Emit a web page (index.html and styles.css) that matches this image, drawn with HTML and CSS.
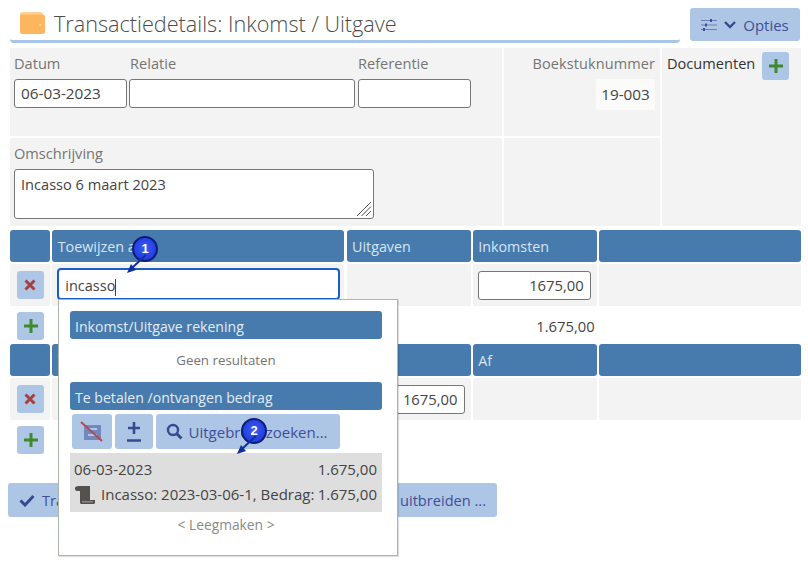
FILE: index.html
```html
<!DOCTYPE html>
<html lang="nl">
<head>
<meta charset="utf-8">
<title>Transactiedetails</title>
<link rel="stylesheet" href="styles.css">
</head>
<body>
<div class="page">
  <header class="top">
    <div class="title">
      <svg class="wallet" width="26" height="22" viewBox="0 0 26 22"><rect x="1" y="0" width="23" height="10" rx="3" fill="#fed08f"/><rect x="1" y="2.500" width="25" height="19.500" rx="2.500" fill="#fdb65f"/><rect x="20.500" y="12" width="2" height="2" fill="#fdd9a8"/></svg>
      <h1>Transactiedetails: Inkomst / Uitgave</h1>
    </div>
    <button class="btn opties">
      <svg width="16" height="14" viewBox="0 0 16 14"><path d="M0 2.500h16M0 7h16M0 11.500h16" stroke="#6f7fb4" stroke-width="1"/><path d="M10 1v3M5 5.500v3M3 10v3" stroke="#3d4f95" stroke-width="2"/></svg>
      <svg width="14" height="10" viewBox="0 0 14 10"><path d="M2 2l5 5 5-5" fill="none" stroke="#39498f" stroke-width="2.400"/></svg>
      <span>Opties</span>
    </button>
  </header>

  <section class="form">
    <div class="cell fields">
      <div class="field f-date"><label>Datum</label><div class="input digits">06-03-2023</div></div>
      <div class="field f-rel"><label class="nudge">Relatie</label><div class="input"></div></div>
      <div class="field f-ref"><label>Referentie</label><div class="input"></div></div>
    </div>
    <div class="cell boek"><label>Boekstuknummer</label><div class="boeknr">19-003</div></div>
    <div class="cell docs"><span>Documenten</span><button class="btn square"><svg width="14" height="14" viewBox="0 0 14 14"><path d="M7 0v14M0 7h14" stroke="#3f8a2c" stroke-width="3"/></svg></button></div>
    <div class="cell oms"><label>Omschrijving</label>
      <div class="input area">Incasso 6 maart 2023
        <svg class="grip" width="16" height="16" viewBox="0 0 16 16"><path d="M1 15L15 1M5.500 15L15 5.500M10 15l5-5" stroke="#555" stroke-width="1"/></svg>
      </div>
    </div>
    <div class="cell empty"></div>
  </section>

  <section class="grid first">
    <div class="th"></div><div class="th">Toewijzen aan</div><div class="th">Uitgaven</div><div class="th">Inkomsten</div><div class="th"></div>
    <div class="td center"><button class="btn square"><svg width="12" height="12" viewBox="0 0 12 12"><path d="M1.500 1.500l9 9M10.500 1.500l-9 9" stroke="#a8403f" stroke-width="3"/></svg></button></div>
    <div class="td pad"><div class="input focus">incasso<span class="caret"></span></div></div>
    <div class="td"></div>
    <div class="td pad"><div class="input num">1675,00</div></div>
    <div class="td"></div>
    <div class="add"><button class="btn square"><svg width="14" height="14" viewBox="0 0 14 14"><path d="M7 0v14M0 7h14" stroke="#3f8a2c" stroke-width="3"/></svg></button></div>
    <div class="total">1.675,00</div>
  </section>

  <section class="grid second">
    <div class="th"></div><div class="th">Tegenrekening</div><div class="th">Bij</div><div class="th">Af</div><div class="th"></div>
    <div class="td center"><button class="btn square"><svg width="12" height="12" viewBox="0 0 12 12"><path d="M1.500 1.500l9 9M10.500 1.500l-9 9" stroke="#a8403f" stroke-width="3"/></svg></button></div>
    <div class="td"></div>
    <div class="td pad-r"><div class="input num">1675,00</div></div>
    <div class="td"></div>
    <div class="td"></div>
    <div class="add"><button class="btn square"><svg width="14" height="14" viewBox="0 0 14 14"><path d="M7 0v14M0 7h14" stroke="#3f8a2c" stroke-width="3"/></svg></button></div>
  </section>

  <footer class="actions">
    <button class="btn act act-1">
      <svg width="16" height="13" viewBox="0 0 16 13"><path d="M1.500 6.500l4.500 4.500 8.500-9" fill="none" stroke="#39498f" stroke-width="3"/></svg>
      <span>Transactie opslaan</span>
    </button>
    <button class="btn act act-2"><span>Transactie uitbreiden ...</span></button>
  </footer>
</div>

<div class="popup">
  <div class="pop-head">Inkomst/Uitgave rekening</div>
  <div class="none">Geen resultaten</div>
  <div class="pop-head">Te betalen /ontvangen bedrag</div>
  <div class="tools">
    <button class="btn tool t1">
      <svg width="24" height="22" viewBox="0 0 24 22"><rect x="4" y="4" width="17" height="15" fill="#7488bb"/><path d="M8 8h9M8 14h9" stroke="#b0c7e6" stroke-width="2"/><path d="M1 1l21 19" stroke="#b24a55" stroke-width="2"/></svg>
    </button>
    <button class="btn tool t2">
      <svg width="16" height="22" viewBox="0 0 16 22"><path d="M8 1v12M2 7h12M1 19.500h14" stroke="#39498f" stroke-width="2.600"/></svg>
    </button>
    <button class="btn tool t3">
      <svg width="17" height="17" viewBox="0 0 17 17"><circle cx="7" cy="7" r="5" fill="none" stroke="#39498f" stroke-width="2.400"/><path d="M10.500 10.500l5 5" stroke="#39498f" stroke-width="3"/></svg>
      <span>Uitgebreid zoeken...</span>
    </button>
  </div>
  <div class="result">
    <div class="res-row"><span>06-03-2023</span><span>1.675,00</span></div>
    <div class="res-row">
      <span class="res-left">
        <svg width="22" height="20" viewBox="0 0 22 20"><path d="M1 2.500C2 1 4 1 5 1h11v14h5v2.500c0 1-1 1.500-2 1.500H8c-1 0-2-.5-2-1.500V6H3C1.500 6 .5 4 1 2.500z" fill="#55514e"/><path d="M8 16h11v1.500H8z" fill="#8b8885"/></svg>
        <span>Incasso: 2023-03-06-1, Bedrag:</span>
      </span>
      <span>1.675,00</span>
    </div>
  </div>
  <div class="clear">&lt; Leegmaken &gt;</div>
</div>

<div class="note n1">1</div>
<svg class="arrow a1" width="24" height="20" viewBox="0 0 24 20"><path d="M20 1L7 13" stroke="#0f2f9c" stroke-width="2"/><path d="M1 19l9-3-5-6z" fill="#0f2f9c"/></svg>
<div class="note n2">2</div>
<svg class="arrow a2" width="24" height="20" viewBox="0 0 24 20"><path d="M20 1L7 13" stroke="#0f2f9c" stroke-width="2"/><path d="M1 19l9-3-5-6z" fill="#0f2f9c"/></svg>
</body>
</html>
```
FILE: styles.css
```css
* { box-sizing: border-box; }
html, body { margin: 0; padding: 0; }
body {
  width: 808px;
  height: 563px;
  overflow: hidden;
  position: relative;
  background: #fff;
  font-family: "Open Sans", "Noto Sans", sans-serif;
  font-size: 14.600px;
  color: #444;
}
.page { padding: 8px 8px 0 8px; display: flex; flex-direction: column; }

.btn {
  border: 0;
  padding: 0;
  margin: 0;
  background: #aec6e6;
  color: #414f97;
  border-radius: 3px;
  font: inherit;
  display: inline-flex;
  align-items: center;
  justify-content: center;
}

.top { display: flex; justify-content: space-between; align-items: flex-start; height: 35px; margin-bottom: 5px; }
.title {
  width: 670px;
  height: 35px;
  margin-left: 2px;
  padding-left: 10px;
  display: flex;
  align-items: center;
  gap: 9px;
  border-bottom: 3px solid #a9c5e8;
  border-radius: 0 0 4px 4px;
}
h1 { margin: -1px 0 0; font-weight: 300; font-size: 21.650px; line-height: 30px; color: #4d4d4d; white-space: nowrap; }
.wallet { flex: none; margin-top: -3px; margin-left: -1px; }
.opties { width: 110px; height: 33px; gap: 6px; font-size: 15px; }

.form {
  margin-left: 2px;
  display: grid;
  grid-template-columns: 492px 156px 139px;
  grid-template-rows: 88px 88px;
  gap: 2px 2px;
  width: 791px;
}
.cell { background: #f3f3f3; }
label { display: block; color: #757575; font-size: 14.600px; line-height: 19px; }
.nudge { padding-left: 1px; }
.input {
  background: #fff;
  border: 1px solid #777;
  border-radius: 3px;
  height: 29px;
  padding: 0 6px;
  line-height: 27px;
  color: #444;
  font-size: 14.600px;
}
.digits { font-size: 15.300px; }
.fields { display: flex; padding: 6px 0 0 4px; gap: 2px; }
.field label { margin-bottom: 6px; }
.f-date { width: 113px; }
.f-rel { width: 226px; }
.f-ref { width: 113px; margin-left: 1px; }
.boek { padding: 6px 5px 0 0; text-align: right; display: flex; flex-direction: column; align-items: flex-end; }
.boek label { margin-bottom: 6px; font-size: 14.500px; letter-spacing: .1px; }
.boeknr { background: #fbfbfb; border-radius: 2px; width: 59px; height: 31px; line-height: 31px; text-align: center; font-size: 15.300px; }
.docs { grid-row: span 2; padding: 5px 0 0 5px; display: flex; align-items: flex-start; gap: 7px; color: #333; }
.docs span { line-height: 21px; }
.docs .btn { margin-top: -1px; }
.square { width: 27px; height: 28px; }
.oms { padding: 6px 0 0 4px; }
.oms label { margin-bottom: 6px; }
.area {
  position: relative;
  width: 360px;
  height: 50px;
  padding-top: 2px;
  line-height: 25px;
}
.grip { position: absolute; right: 1px; bottom: 1px; }

.grid {
  margin-left: 2px;
  width: 791px;
  display: grid;
  grid-template-columns: 40px 292px 124px 124px 202px;
  column-gap: 2.250px;
  row-gap: 2px;
}
.first { margin-top: 4px; }
.th {
  background: #477bae;
  color: #d6e4f2;
  height: 32px;
  line-height: 33px;
  padding-left: 5.500px;
  border-radius: 3px;
  font-size: 14.300px;
  white-space: nowrap;
  overflow: hidden;
}
.td { background: #f3f3f3; height: 42px; border-radius: 2px; display: flex; align-items: center; }
.center { justify-content: center; }
.pad { padding: 0 6px 0 5px; }
.pad > .input { width: 100%; }
.pad-r { padding-right: 6px; }
.pad-r > .input { width: 100%; }
.pad > .focus { width: calc(100% + 2px); flex: none; border: 2px solid #1a5fc9; border-radius: 4px; height: 32px; padding-left: 6px; line-height: 31px; font-size: 14.500px; align-self: flex-start; margin-top: 4px; }
.caret { display: inline-block; width: 1px; height: 17px; background: #444; vertical-align: middle; }
.num { text-align: right; font-size: 14.800px; }
.add { height: 36px; display: flex; align-items: center; padding-left: 7px; }
.first .add { grid-column: 1 / span 3; }
.total { grid-column: 4; height: 36px; line-height: 37px; text-align: right; padding-right: 2px; font-size: 14.800px; }
.second .add { grid-column: 1 / -1; height: 36px; }

.actions { display: flex; gap: 8px; margin-top: 25px; }
.act { height: 34px; justify-content: flex-start; padding-left: 11px; gap: 7px; font-size: 14.600px; line-height: 36px; }
.act-1 { width: 240px; }
.act-2 { width: 241px; justify-content: flex-end; padding-right: 11px; }

.popup {
  position: absolute;
  left: 58px;
  top: 299px;
  width: 340px;
  height: 257px;
  background: #fff;
  border: 1px solid #a9b7a9;
  padding: 11px 15px 0 11px;
  box-shadow: 1px 1px 1px rgba(0,0,0,.12);
}
.pop-head {
  background: #477bae;
  color: #e1ebf5;
  height: 28px;
  line-height: 31px;
  border-radius: 3px;
  padding-left: 5px;
  font-size: 14.100px;
  white-space: nowrap;
}
.none { height: 43px; line-height: 43px; text-align: center; color: #757575; font-size: 13.300px; }
.tools { display: flex; gap: 3px; margin: 4px 0 4px 2px; }
.tool { height: 35px; }
.t1 { width: 40px; }
.t2 { width: 37.500px; }
.t3 { width: 184.500px; gap: 6px; font-size: 15px; justify-content: flex-start; padding-left: 10px; }
.result { background: #dedede; height: 59px; padding: 4px 5px 0 4px; }
.res-row { display: flex; justify-content: space-between; height: 25px; line-height: 25px; color: #444; font-size: 15px; }
.res-left { display: flex; align-items: center; gap: 5px; }
.clear { text-align: center; color: #8a8a8a; font-size: 13.800px; line-height: 20px; margin-top: 3px; }

.note {
  position: absolute;
  width: 26px;
  height: 26px;
  border-radius: 50%;
  background: radial-gradient(circle at 50% 45%, #3a5cf5, #1b30d8);
  border: 2px solid #0a1e78;
  color: #fff;
  font-family: "Liberation Sans", sans-serif;
  font-size: 13px;
  font-weight: 700;
  line-height: 22px;
  text-align: center;
}
.n1 { left: 132px; top: 236px; }
.n2 { left: 241px; top: 418px; }
.arrow { position: absolute; }
.a1 { left: 126px; top: 254px; }
.a2 { left: 236px; top: 435px; }
```
